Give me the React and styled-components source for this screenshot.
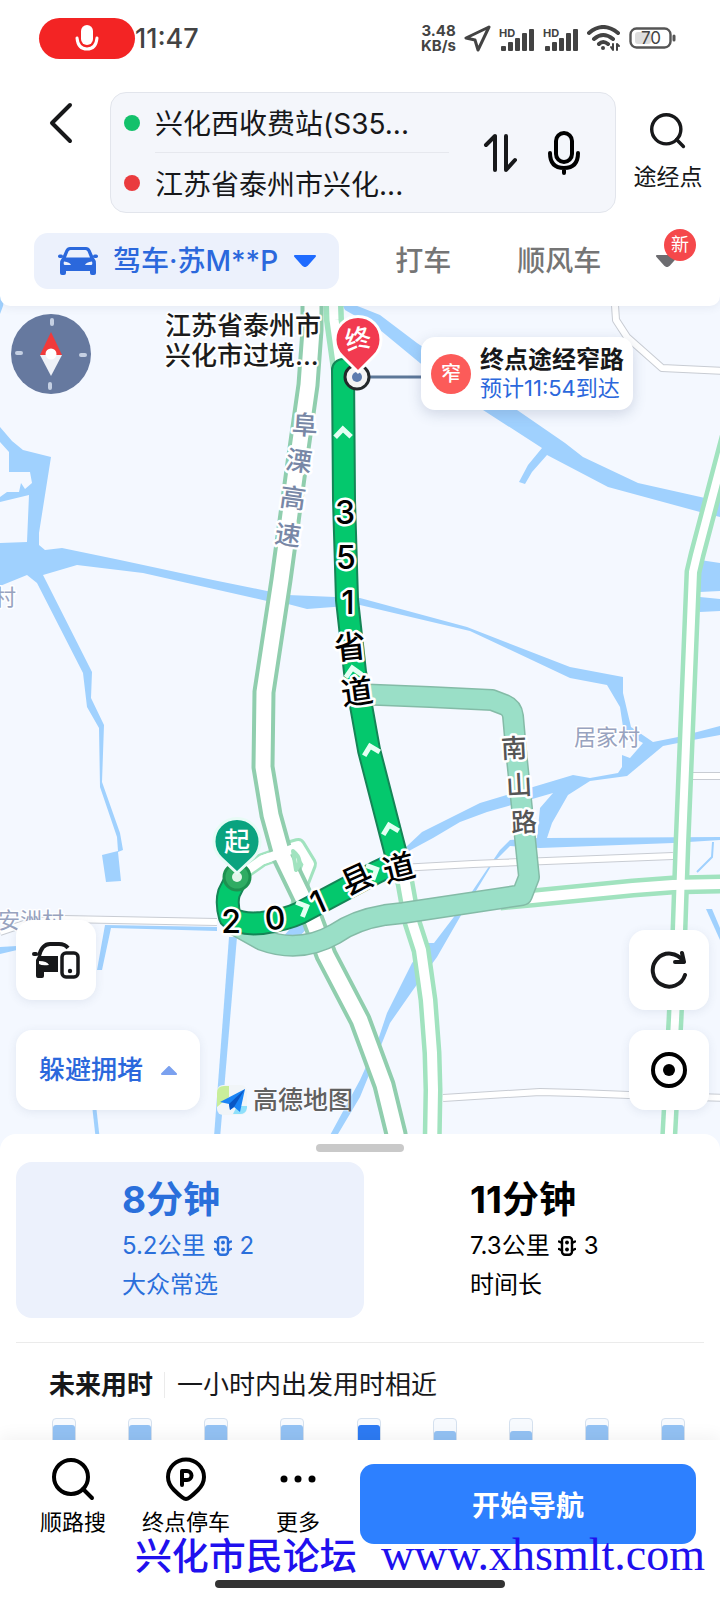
import React from 'react'
import styled, { createGlobalStyle, css } from 'styled-components'

const color = {
  ink: '#17181a',
  blue: '#2b68dc',
  primary: '#2d80ff',
  tint: '#ecf1fc',
  grey: '#757575',
  line: '#ebebeb',
  red: '#f5484b',
  water: '#a0d1fe',
  land: '#f4f8ff',
  highway: '#90ceae',
  road: '#a1e3bf',
  route: '#04c86d',
  routeEdge: '#148556',
  alt: '#9adfc7',
  altEdge: '#84bba7'
}

const GlobalStyle = createGlobalStyle`
  * {
    box-sizing: border-box;
  }
  body {
    margin: 0;
    background: #fff;
    color: ${color.ink};
    font-family: Inter, 'Noto Sans CJK SC', sans-serif;
  }
  button, input {
    margin: 0;
    padding: 0;
    border: 0;
    background: none;
    color: inherit;
    font: inherit;
  }
  svg {
    display: block;
    flex: none;
  }
`

const Page = styled.div`
  display: flex;
  flex-direction: column;
  min-height: 100vh;
  position: relative;
  overflow: hidden;
`

/* header */

const Header = styled.header`
  position: relative;
  z-index: 2;
  height: 306px;
  background: #fff;
  border-radius: 0 0 10px 10px;
  box-shadow: 0 2px 8px rgba(60, 80, 120, 0.08);
`
const StatusBar = styled.div`
  display: flex;
  align-items: center;
  height: 76px;
  padding: 0 44px 0 39px;
  color: #434343;
`
const RecordPill = styled.span`
  display: flex;
  align-items: center;
  justify-content: center;
  width: 96px;
  height: 41px;
  border-radius: 21px;
  background: #f32424;
`
const Clock = styled.time`
  flex: 1;
  font-size: 27px;
  font-weight: 500;
`
const StatusIcons = styled.div`
  display: flex;
  align-items: center;
  gap: 8px;
`
const Speed = styled.div`
  font-size: 15px;
  line-height: 15px;
  font-weight: 700;
  text-align: center;
`
const SpeedLine = styled.span`
  display: block;
`
const SearchRow = styled.div`
  display: flex;
  align-items: center;
  margin-top: 16px;
  padding-right: 16px;
`
const Back = styled.button`
  display: flex;
  align-self: flex-start;
  justify-content: flex-end;
  width: 110px;
  padding: 10px 37px 0 0;
`
const Places = styled.div`
  display: flex;
  flex: 1;
  align-items: center;
  height: 121px;
  border: 1px solid #e2e5ec;
  border-radius: 16px;
  background: #f4f6fb;
`
const Fields = styled.div`
  flex: 1;
  min-width: 0;
`
const Field = styled.label`
  display: flex;
  align-items: center;
  height: 60px;
  padding-left: 13px;
`
const Dot = styled.span`
  flex: none;
  width: 16px;
  height: 16px;
  margin-right: 15px;
  border-radius: 50%;
  background: ${props => props.$color};
`
const PlaceInput = styled.input`
  width: 100%;
  height: 60px;
  font-size: 28px;
  outline: none;
  ${props => props.$divided && css`
    border-bottom: 1px solid #e6e8ee;
  `}
`
const PlaceTools = styled.div`
  display: flex;
  gap: 30px;
  padding: 0 34px;
`
const Waypoint = styled.button`
  display: flex;
  flex-direction: column;
  align-items: center;
  gap: 12px;
  width: 72px;
  margin-left: 16px;
  font-size: 23px;
  line-height: 32px;
  white-space: nowrap;
`
const Tabs = styled.nav`
  display: flex;
  align-items: center;
  margin-top: 20px;
  padding: 0 24px 0 34px;
`
const Tab = styled.button`
  display: flex;
  align-items: center;
  height: 56px;
  color: ${color.grey};
  font-size: 28px;
  font-weight: 500;
  line-height: 36px;
  white-space: nowrap;
  margin-right: ${props => props.$gap}px;
  ${props => props.$active && css`
    gap: 15px;
    padding: 0 22px 0 24px;
    border-radius: 14px;
    background: ${color.tint};
    color: ${color.blue};
  `}
`
const MoreTab = styled.button`
  position: relative;
  width: 41px;
  height: 56px;
  margin-left: auto;
`
const Badge = styled.span`
  position: absolute;
  top: -4px;
  right: 0;
  width: 32px;
  height: 32px;
  border-radius: 50%;
  background: ${color.red};
  color: #fff;
  font-size: 18px;
  line-height: 32px;
  text-align: center;
`

/* map */

const MapArea = styled.main`
  position: relative;
  flex: 1;
  min-height: 700px;
  margin: -16px 0;
  background: ${color.land};
`
const MapCanvas = styled.svg`
  position: absolute;
  inset: 0;
  width: 100%;
  height: 100%;
`
const CompassButton = styled.button`
  position: absolute;
  top: 24px;
  left: 11px;
`
const Callout = styled.div`
  position: absolute;
  top: 47px;
  left: 421px;
  display: flex;
  align-items: center;
  gap: 9px;
  width: 212px;
  height: 73px;
  padding: 0 10px;
  border-radius: 14px;
  background: #fff;
  box-shadow: 0 4px 14px rgba(60, 80, 120, 0.2);
  white-space: nowrap;
`
const NarrowSign = styled.span`
  flex: none;
  width: 40px;
  height: 40px;
  border-radius: 50%;
  background: #fc5b59;
  color: #fff;
  font-size: 20px;
  font-weight: 500;
  line-height: 40px;
  text-align: center;
`
const CalloutTitle = styled.strong`
  display: block;
  font-size: 24px;
  font-weight: 700;
  line-height: 28px;
`
const CalloutTime = styled.span`
  display: block;
  color: ${color.blue};
  font-size: 22px;
  line-height: 28px;
`
const Corner = styled.div`
  position: absolute;
  bottom: 40px;
  display: flex;
  flex-direction: column;
  ${props => props.$side}: ${props => (props.$side === 'left' ? 16 : 11)}px;
  gap: ${props => (props.$side === 'left' ? 30 : 20)}px;
`
const Tile = styled.button`
  display: flex;
  align-items: center;
  justify-content: center;
  gap: 18px;
  width: ${props => (props.$wide ? 184 : 80)}px;
  height: 80px;
  border-radius: 16px;
  background: #fff;
  box-shadow: 0 2px 10px rgba(60, 80, 120, 0.1);
  color: ${props => (props.$wide ? color.blue : color.ink)};
  font-size: 26px;
  font-weight: 500;
  line-height: 36px;
`
const Brand = styled.div`
  position: absolute;
  bottom: 32px;
  left: 217px;
  display: flex;
  align-items: center;
  gap: 6px;
  color: #606060;
  font-size: 25px;
  font-weight: 500;
  line-height: 36px;
  text-shadow: 0 0 2px #fff, 0 0 2px #fff;
`

/* sheet */

const Sheet = styled.section`
  position: relative;
  z-index: 1;
  height: 306px;
  padding-top: 10px;
  border-radius: 16px 16px 0 0;
  background: #fff;
  overflow: hidden;
`
const Handle = styled.div`
  width: 88px;
  height: 8px;
  margin: 0 auto 10px;
  border-radius: 4px;
  background: #c9c9c9;
`
const Plans = styled.div`
  display: grid;
  grid-template-columns: 1fr 1fr;
  padding: 0 8px 0 16px;
`
const Plan = styled.button`
  height: 156px;
  padding: 12px 0 14px 106px;
  border-radius: 16px;
  background: ${props => (props.$active ? color.tint : 'none')};
  color: ${props => (props.$active ? '#2a6fdb' : '#000')};
  text-align: left;
`
const PlanTime = styled.div`
  font-size: 37px;
  font-weight: 700;
  line-height: 52px;
`
const PlanInfo = styled.div`
  display: flex;
  align-items: center;
  gap: 8px;
  font-size: 24px;
  line-height: 39px;
`
const Future = styled.div`
  margin: 24px 16px 0;
  padding: 24px 0 0 33px;
  border-top: 1px solid ${color.line};
`
const FutureHead = styled.div`
  display: flex;
  align-items: center;
  font-size: 26px;
  line-height: 36px;
  white-space: nowrap;
`
const FutureTitle = styled.h2`
  margin: 0 12px 0 0;
  padding-right: 11px;
  border-right: 1px solid ${color.line};
  font-size: 26px;
  font-weight: 700;
  line-height: 26px;
`
const Bars = styled.div`
  display: flex;
  justify-content: space-between;
  margin-top: 15px;
  padding: 0 19px 0 3px;
`
const Bar = styled.div`
  display: flex;
  align-items: flex-end;
  width: 24px;
  height: 60px;
  border: 1px solid #d5e1ef;
  border-radius: 4px;
  background: #f7fafe;
`
const BarFill = styled.div`
  width: 100%;
  border-radius: 3px;
  background: ${props => (props.$active ? '#2d7bf4' : '#93c2f4')};
`

/* bottom bar */

const Footer = styled.footer`
  position: relative;
  z-index: 2;
  height: 160px;
  background: #fff;
  box-shadow: 0 -4px 16px rgba(0, 0, 0, 0.05);
`
const Actions = styled.div`
  display: flex;
  padding: 14px 24px 0 18px;
`
const Action = styled.button`
  display: flex;
  flex-direction: column;
  align-items: center;
  gap: 2px;
  width: ${props => props.$width}px;
  color: #000;
  font-size: 22px;
  line-height: 32px;
  white-space: nowrap;
`
const StartButton = styled.button`
  flex: 1;
  height: 80px;
  margin: 10px 0 0 8px;
  border-radius: 14px;
  background: ${color.primary};
  color: #fff;
  font-size: 28px;
  font-weight: 700;
`
const HomeIndicator = styled.div`
  position: absolute;
  bottom: 12px;
  left: 50%;
  width: 290px;
  height: 8px;
  margin-left: -145px;
  border-radius: 4px;
  background: #333;
`
const Watermark = styled.div`
  position: absolute;
  z-index: 3;
  right: 15px;
  bottom: 14px;
  display: flex;
  align-items: baseline;
  gap: 24px;
  color: #2010ee;
  font-family: 'Liberation Serif', 'Noto Sans CJK SC', serif;
  font-size: 37px;
  font-weight: 500;
  line-height: 56px;
  white-space: nowrap;
  pointer-events: none;
`
const Site = styled.span`
  font-size: 46px;
  font-weight: 400;
`

const Icon = ({ w, h, sw = 4, children, box, ...rest }) => (
  <svg
    width={w}
    height={h}
    viewBox={box || `0 0 ${w} ${h}`}
    fill="none"
    stroke="currentColor"
    strokeWidth={sw}
    strokeLinecap="round"
    strokeLinejoin="round"
    aria-hidden="true"
    {...rest}
  >
    {children}
  </svg>
)

const CaretDown = ({ fill }) => (
  <Icon w={24} h={12} sw={2} color={fill}>
    <path fill="currentColor" d="M2 1H22L14 10Q12 12 10 10Z" />
  </Icon>
)

const CaretUp = ({ fill }) => (
  <Icon w={16} h={9} sw={2} color={fill}>
    <path fill="currentColor" d="M1 8L8 1L15 8Z" />
  </Icon>
)

const Magnifier = ({ size }) => (
  <Icon w={size} h={size} box="0 0 42 42">
    <circle cx="19" cy="19" r="17" />
    <path d="M31 31L39 39" />
  </Icon>
)

const Signal = () => (
  <svg width="36" height="25" viewBox="0 0 36 25" fill="#434343" aria-hidden="true">
    <text x="0" y="11" fontSize="11" fontWeight="700">HD</text>
    <rect x="2" y="20" width="5" height="5" rx="1" />
    <rect x="9" y="16" width="5" height="9" rx="1" />
    <rect x="16" y="12" width="5" height="13" rx="1" />
    <rect x="23" y="7" width="5" height="18" rx="1" />
    <rect x="30" y="3" width="5" height="22" rx="1" />
  </svg>
)

const LocationArrow = () => (
  <Icon w={27} h={27} sw={3}>
    <path d="M25 2L2 13L11 15L14 25Z" />
  </Icon>
)

const Wifi = () => (
  <Icon w={34} h={26} sw={4}>
    <path d="M2 8Q16 -4 31 8M7 14Q16 6 26 14M12 19Q16 15 21 19" />
    <circle cx="16" cy="23" r="2" fill="currentColor" stroke="none" />
    <path d="M26 19V25L24 22M30 25V19L32 21" strokeWidth="2" />
  </Icon>
)

const Battery = () => (
  <svg width="47" height="22" viewBox="0 0 47 22" aria-hidden="true">
    <rect x="1.5" y="1.5" width="40" height="19" rx="6" fill="none" stroke="#555" strokeWidth="2.4" />
    <rect x="6" y="5" width="16" height="12" rx="3" fill="#ddd" />
    <path d="M45 9V13" stroke="#555" strokeWidth="3" strokeLinecap="round" />
    <text x="22" y="17" fontSize="17" fill="#434343" textAnchor="middle">70</text>
  </svg>
)

const Car = () => (
  <svg width="40" height="28" viewBox="0 0 40 28" fill={color.blue} aria-hidden="true">
    <path
      fillRule="evenodd"
      d="M12 0H28Q31 0 32.5 3L36 11Q38 13 38 17V26Q38 28 36 28H34Q32 28 32 26V24H8V26Q8 28 6 28H4Q2 28 2 26V17Q2 13 4 11L7.5 3Q9 0 12 0ZM12.5 3Q11 3 10.4 4.5L8 10.5H32L29.6 4.5Q29 3 27.5 3ZM6 14.5Q5 18 7 18H13Q12 15 6 14.5ZM34 14.5Q35 18 33 18H27Q28 15 34 14.5Z"
    />
    <rect x="0" y="7.5" width="5" height="3.5" rx="1.7" />
    <rect x="35" y="7.5" width="5" height="3.5" rx="1.7" />
  </svg>
)

const TrafficLight = () => (
  <Icon w={18} h={20} sw={2.4}>
    <rect x="4" y="1.2" width="10" height="17.5" rx="3" />
    <path d="M1 5.5L4 7M1 13L4 14.5M17 5.5L14 7M17 13L14 14.5" />
    <circle cx="9" cy="6.5" r="1.9" fill="currentColor" stroke="none" />
    <circle cx="9" cy="13.5" r="1.9" fill="currentColor" stroke="none" />
  </Icon>
)

const CarPhone = () => (
  <svg width="48" height="38" viewBox="0 0 48 38" aria-hidden="true">
    <path d="M7 15Q10 3 18 3H27Q33 3 36 7" fill="none" stroke={color.ink} strokeWidth="4" />
    <rect x="0" y="11" width="6" height="4" rx="2" fill={color.ink} />
    <path
      fill={color.ink}
      fillRule="evenodd"
      d="M6 15H26V31H12V35Q12 37 10 37H6Q4 37 4 35V19ZM7 20V23Q10 25 17 24Q15 20 7 20Z"
    />
    <rect x="30" y="12" width="16" height="24" rx="4" fill="#fff" stroke={color.ink} strokeWidth="3.5" />
    <circle cx="38" cy="30" r="2.2" fill={color.ink} />
  </svg>
)

const Compass = () => (
  <svg width="80" height="80" viewBox="0 0 80 80" aria-hidden="true">
    <circle cx="40" cy="40" r="40" fill="#66799f" />
    <path d="M41 6V10M39 70V74M6 39H10M70 41H74" stroke="#c5d0e3" strokeWidth="4" strokeLinecap="round" />
    <path d="M40 18L51 41H29Z" fill="#f13a3a" />
    <path d="M29 41H51L40 62Z" fill="#eef1f7" />
    <circle cx="40" cy="40" r="5.5" fill="#fff" />
  </svg>
)

const BrandMark = () => (
  <svg width="30" height="30" viewBox="0 0 30 30" aria-hidden="true">
    <rect width="30" height="30" rx="6" fill="#f1f5f8" />
    <path d="M0 8Q0 1 7 1H12V12L0 22Z" fill="#c8ee9a" />
    <path d="M20 21H30V23Q29 29 23 29H16Z" fill="#8fe0fb" />
    <path d="M3 17L28 4L23 27L17 22L13 25L12 19Z" fill="#1a84f5" />
    <path d="M28 4L12 19L13 25L17 22Z" fill="#0a56c4" />
  </svg>
)

/* map data */

const water = [
  '0,290 4,300 3,306 0,314',
  '0,427 12,441 23,450 51,457 39,533 39,545 45,550 62,548 120,560 213,580 267,591 288,595 335,597 360,598 467,627 570,667 623,677 623,693 631,727 653,742 678,737 720,726 720,735 693,740 663,746 627,776 590,781 568,795 552,823 547,838 720,837 720,840 673,843 540,848 510,846 493,863 460,917 437,957 413,990 390,1023 382,1043 360,1097 338,1134 326,1150 322,1150 360,1080 378,1040 387,1013 412,963 428,943 434,943 463,905 500,850 510,840 537,838 540,808 553,793 487,812 460,822 433,838 407,852 405,848 422,832 480,803 533,787 573,775 590,778 618,773 622,767 622,755 630,758 643,743 630,736 623,727 620,707 607,685 570,678 470,631 360,605 307,609 288,604 267,601 143,573 77,565 43,575 92,672 91,698 104,725 102,782 120,833 123,850 118,852 121,881 106,882 102,855 118,851 117,837 100,787 99,728 87,707 83,673 37,583 27,575 0,586 0,543 27,542 29,495 0,502 0,497 7,492 19,492 21,483 25,489 32,483 30,472 9,472 9,452 0,442',
  '340,300 360,307 380,315 417,343 520,412 565,443 583,457 638,483 705,498 720,500 720,517 700,512 608,487 547,455 532,472 525,484 519,482 528,465 542,448 483,410 420,363 380,330 345,310',
  '700,560 720,563 720,591 700,592',
  '700,597 720,599 720,611 700,612',
  '706,909 712,909 720,928 720,940',
  '0,947 17,946 17,950 0,954',
  '105,925 217,927 217,931 111,928 102,970 97,970',
  '229,937 237,937 219,1150 213,1150',
  '92,1105 96,1105 101,1150 97,1150',
  '280,940 300,918 322,912 300,936'
]

const minorRoads = [
  '614,290 616,320 627,337 662,368 725,371',
  '400,868 473,864 673,856',
  '693,776 725,776',
  '443,1098 540,1092 578,1093 629,1095 725,1098',
  '0,932 30,922 63,919 217,922'
]

const greenRoads = [
  { width: 20, inner: 9, points: '333,290 334,320 341,370' },
  { width: 19, inner: 10, points: '398,860 405,883 412,922 421,950 428,1000 432,1053 433,1090 432,1150' },
  { width: 19, inner: 10, points: '500,901 532,898 633,888 673,885 725,884' },
  { width: 17, inner: 8, points: '730,430 697,555 693,572 682,843 679,930 675,1020 668,1150' },
  { width: 14, inner: 9, points: '245,872 262,860 282,853' },
  { width: 16, inner: 10, points: '284,850 298,846 309,864 302,882 298,908' }
]

const highway = '312,290 312,330 308,385 296,470 281,580 264,692 263,767 271,815 282,855 311,915 326,955 360,1020 384,1085 396,1134 398,1150'
const altRoute = 'M355,694L430,697L492,700L505,705Q512,708 513,716L516,750L529,877L522,895L403,913L385,915Q355,920 335,934Q300,954 262,940L235,925'
const mainRoute = 'M237,877L229,893Q226,903 230,917Q240,925 262,923Q285,920 300,913L377,872L398,862L393,843L369,750L355,672L347,600L344,500L343,370'

const arrows = [
  [343, 433, -2],
  [353, 672, -10],
  [371, 750, -14],
  [390, 829, -14],
  [303, 908, 67],
  [373, 871, 65]
]

const roadNames = [
  { size: 32, fill: '#000', chars: [['3', 345, 512, 0], ['5', 346, 557, 0], ['1', 348, 602, 0], ['省', 350, 647, -6], ['道', 357, 692, -8]] },
  { size: 32, fill: '#000', chars: [['2', 231, 921, 0], ['0', 275, 918, -5], ['1', 318, 902, -24], ['县', 357, 879, -25], ['道', 399, 868, -14]] },
  { size: 26, fill: '#7887a6', chars: [['阜', 305, 425, 4], ['溧', 299, 461, 8], ['高', 293, 498, 8], ['速', 288, 535, 8]] },
  { size: 26, fill: '#555', chars: [['南', 514, 748, -3], ['山', 519, 785, -3], ['路', 524, 822, -3]] }
]

const villages = [
  ['居家村', 607, 737],
  ['村', 5, 597],
  ['安洲村', 31, 920]
]

const label = {
  textAnchor: 'middle',
  dominantBaseline: 'central',
  stroke: '#fff',
  paintOrder: 'stroke',
  strokeLinejoin: 'round'
}

const CityMap = () => (
  <MapCanvas viewBox="0 290 720 860" preserveAspectRatio="xMidYMid slice" role="img" aria-label="路线地图">
    <g fill={color.water}>
      {water.map(points => <polygon key={points} points={points} />)}
    </g>
    <path d="M713,842L712,857L697,872" fill="none" stroke={color.water} strokeWidth="2" />

    <g fill="none" strokeLinejoin="round">
      {minorRoads.map(points => <polyline key={points} points={points} stroke="#c8ccd3" strokeWidth="8" />)}
      {minorRoads.map(points => <polyline key={points} points={points} stroke="#fff" strokeWidth="6" />)}
      {greenRoads.map(r => <polyline key={r.points} points={r.points} stroke={color.road} strokeWidth={r.width} />)}
      {greenRoads.map(r => <polyline key={r.points} points={r.points} stroke="#fff" strokeWidth={r.inner} />)}
      <polyline points={highway} stroke={color.highway} strokeWidth="23" />
      <polyline points={highway} stroke="#fff" strokeWidth="15" />
      <path d="M262,860L282,853L298,847" stroke="#fff" strokeWidth="9" />
      <path d="M293,851Q304,860 296,870Z" fill="#fff" stroke={color.road} strokeWidth="4" />
      <path d={altRoute} stroke={color.altEdge} strokeWidth="22" />
      <path d={altRoute} stroke={color.alt} strokeWidth="19" />
      <path d={mainRoute} stroke={color.routeEdge} strokeWidth="24" strokeLinecap="round" />
      <path d={mainRoute} stroke={color.route} strokeWidth="20" strokeLinecap="round" />
      {arrows.map(([x, y, angle]) => (
        <path
          key={y}
          d="M-8,4L0,-4L8,4"
          transform={`translate(${x} ${y}) rotate(${angle})`}
          stroke="#e4fff3"
          strokeWidth="5"
          strokeLinejoin="miter"
        />
      ))}
    </g>

    {roadNames.map(({ size, fill, chars }) => (
      <g key={size + chars[0][0]} {...label} fontSize={size} fontWeight="500" fill={fill} strokeWidth="5">
        {chars.map(([char, x, y, angle]) => (
          <text key={char} transform={`translate(${x} ${y}) rotate(${angle})`}>{char}</text>
        ))}
      </g>
    ))}
    <g {...label} fontSize="22" fill="#98a3bf" strokeWidth="3">
      {villages.map(([name, x, y]) => <text key={name} x={x} y={y}>{name}</text>)}
    </g>
    <g {...label} textAnchor="start" fontSize="26" fontWeight="500" fill="#1c1c1c" strokeWidth="4">
      <text x="165" y="325">江苏省泰州市</text>
      <text x="165" y="355">兴化市过境...</text>
    </g>

    <path d="M360,377H425" stroke="#5c7798" strokeWidth="3" />
    <circle cx="357" cy="377" r="12" fill="#f4f4f4" stroke="#24292b" strokeWidth="3" />
    <circle cx="357" cy="377" r="5" fill="#5d7cae" />
    <path d="M358,372L342,356A23,23 0 1 1 374,356Z" fill="#f23a50" stroke="#fff" strokeWidth="3" />
    <text {...label} stroke="none" transform="translate(358 339) rotate(-12)" fontSize="26" fontWeight="500" fill="#fff">终</text>

    <circle cx="237" cy="877" r="13" fill="#2fac63" stroke="#1d9150" strokeWidth="3" />
    <circle cx="237" cy="877" r="5" fill="#e2f5ea" />
    <path d="M237,873L221,858A23,23 0 1 1 253,858Z" fill="#0aa37f" stroke="#e8fbf6" strokeWidth="3" />
    <text {...label} stroke="none" x="237" y="841" fontSize="26" fontWeight="500" fill="#fff">起</text>
  </MapCanvas>
)

// share of each column that is filled
const forecast = [0.9, 0.9, 0.9, 0.9, 0.9, 0.8, 0.8, 0.9, 0.9]
const currentSlot = 4

const plans = [
  { time: '8分钟', distance: '5.2公里', lights: 2, note: '大众常选' },
  { time: '11分钟', distance: '7.3公里', lights: 3, note: '时间长' }
]

const App = () => (
  <Page>
    <GlobalStyle />
    <Header>
      <StatusBar>
        <RecordPill>
          <Icon w={24} h={28} sw={3} color="#fff">
            <rect x="6" y="1" width="12" height="20" rx="6" fill="#fff" stroke="none" />
            <path d="M2 14Q3 25 12 25Q21 25 22 14" />
          </Icon>
        </RecordPill>
        <Clock>11:47</Clock>
        <StatusIcons>
          <Speed>
            <SpeedLine>3.48</SpeedLine>
            <SpeedLine>KB/s</SpeedLine>
          </Speed>
          <LocationArrow />
          <Signal />
          <Signal />
          <Wifi />
          <Battery />
        </StatusIcons>
      </StatusBar>

      <SearchRow>
        <Back aria-label="返回">
          <Icon w={24} h={42}>
            <path d="M21 3L3 21L21 39" />
          </Icon>
        </Back>
        <Places>
          <Fields>
            <Field>
              <Dot $color="#13c16b" />
              <PlaceInput aria-label="起点" defaultValue="兴化西收费站(S35..." $divided />
            </Field>
            <Field>
              <Dot $color="#ea3b3e" />
              <PlaceInput aria-label="终点" defaultValue="江苏省泰州市兴化..." />
            </Field>
          </Fields>
          <PlaceTools>
            <button aria-label="交换起终点">
              <Icon w={34} h={42}>
                <path d="M3 13L12 4V38M23 4V38L32 28" />
              </Icon>
            </button>
            <button aria-label="语音输入">
              <Icon w={34} h={46} color="#000">
                <rect x="9" y="3" width="16" height="29" rx="8" />
                <path d="M3 23Q3 38 17 38Q31 38 31 23M17 38V43" />
              </Icon>
            </button>
          </PlaceTools>
        </Places>
        <Waypoint>
          <Magnifier size={36} />
          途经点
        </Waypoint>
      </SearchRow>

      <Tabs>
        <Tab $active $gap={56}>
          <Car />
          驾车·苏M**P
          <CaretDown fill="#1f6bff" />
        </Tab>
        <Tab $gap={66}>打车</Tab>
        <Tab $gap={0}>顺风车</Tab>
        <MoreTab aria-label="更多出行方式">
          <CaretDown fill="#6c6c70" />
          <Badge>新</Badge>
        </MoreTab>
      </Tabs>
    </Header>

    <MapArea>
      <CityMap />
      <CompassButton aria-label="指南针">
        <Compass />
      </CompassButton>
      <Callout>
        <NarrowSign>窄</NarrowSign>
        <div>
          <CalloutTitle>终点途经窄路</CalloutTitle>
          <CalloutTime>预计11:54到达</CalloutTime>
        </div>
      </Callout>
      <Brand>
        <BrandMark />
        高德地图
      </Brand>
      <Corner $side="left">
        <Tile aria-label="车机互联">
          <CarPhone />
        </Tile>
        <Tile $wide>
          躲避拥堵
          <CaretUp fill="#7ba1ef" />
        </Tile>
      </Corner>
      <Corner $side="right">
        <Tile aria-label="刷新路线">
          <Icon w={40} h={40}>
            <path d="M36 25A16.5 16.5 0 1 1 34 11M33 3L35 12L26 12" />
          </Icon>
        </Tile>
        <Tile aria-label="我的位置">
          <Icon w={36} h={36} color="#000">
            <circle cx="18" cy="18" r="16" />
            <circle cx="18" cy="18" r="6" fill="currentColor" stroke="none" />
          </Icon>
        </Tile>
      </Corner>
    </MapArea>

    <Sheet>
      <Handle />
      <Plans>
        {plans.map((plan, i) => (
          <Plan key={plan.time} $active={i === 0}>
            <PlanTime>{plan.time}</PlanTime>
            <PlanInfo>
              {plan.distance}
              <TrafficLight />
              {plan.lights}
            </PlanInfo>
            <PlanInfo>{plan.note}</PlanInfo>
          </Plan>
        ))}
      </Plans>
      <Future>
        <FutureHead>
          <FutureTitle>未来用时</FutureTitle>
          一小时内出发用时相近
        </FutureHead>
        <Bars>
          {forecast.map((share, i) => (
            <Bar key={i}>
              <BarFill $active={i === currentSlot} style={{ height: `${share * 100}%` }} />
            </Bar>
          ))}
        </Bars>
      </Future>
    </Sheet>

    <Footer>
      <Actions>
        <Action $width={110}>
          <Icon w={44} h={50} box="0 -4 44 50">
            <circle cx="20" cy="19" r="17" />
            <path d="M32 31L41 40" />
          </Icon>
          顺路搜
        </Action>
        <Action $width={116}>
          <Icon w={42} h={50} box="0 -4 42 50">
            <path d="M21 41Q18 41 9 32Q3 26 3 19A18 17.5 0 0 1 39 19Q39 26 33 32Q24 41 21 41Z" />
            <path d="M17 27V13H22A4.5 4.5 0 0 1 22 22H17" />
          </Icon>
          终点停车
        </Action>
        <Action $width={108}>
          <Icon w={42} h={50} box="0 -4 42 50">
            <g fill="#000" stroke="none">
              <circle cx="7" cy="21" r="3.5" />
              <circle cx="21" cy="21" r="3.5" />
              <circle cx="35" cy="21" r="3.5" />
            </g>
          </Icon>
          更多
        </Action>
        <StartButton>开始导航</StartButton>
      </Actions>
      <HomeIndicator />
    </Footer>

    <Watermark>
      兴化市民论坛
      <Site>www.xhsmlt.com</Site>
    </Watermark>
  </Page>
)

export default App
